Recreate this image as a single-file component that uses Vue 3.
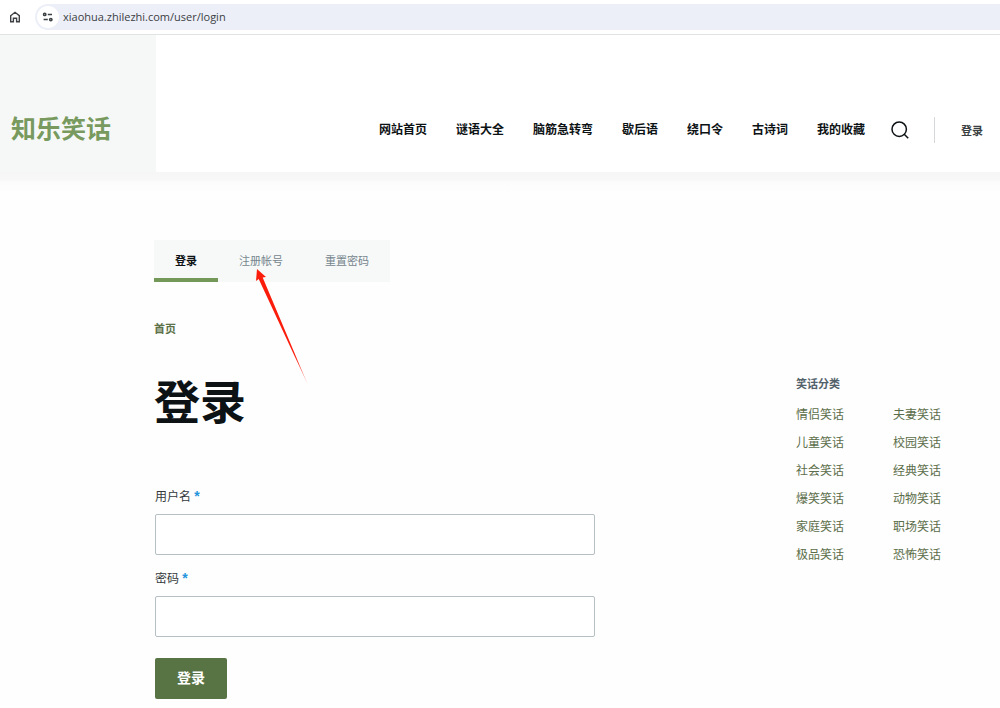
<script setup>
import { ref } from 'vue'

const address = ref('xiaohua.zhilezhi.com/user/login')
const username = ref('')
const password = ref('')
const navItems = ['网站首页', '谜语大全', '脑筋急转弯', '歇后语', '绕口令', '古诗词', '我的收藏']
const tabs = ['登录', '注册帐号', '重置密码']
const categories = [
  '情侣笑话', '夫妻笑话',
  '儿童笑话', '校园笑话',
  '社会笑话', '经典笑话',
  '爆笑笑话', '动物笑话',
  '家庭笑话', '职场笑话',
  '极品笑话', '恐怖笑话',
]
</script>

<template>
  <div class="page">
    <div class="browser-bar">
      <button class="home" type="button" aria-label="Home">
        <svg width="12" height="12" viewBox="0 0 12 12" fill="none" stroke="#3c4043" stroke-width="1.4">
          <path d="M1.7 4.7 6 1.3l4.3 3.4v6.1H7.6V7.2H4.4v3.6H1.7z" />
        </svg>
      </button>
      <div class="address">
        <span class="site-info">
          <svg width="12" height="10" viewBox="0 0 12 10" fill="none" stroke="#3c4043" stroke-width="1.5">
            <circle cx="2.700" cy="2.400" r="1.2" />
            <path d="M5.800 2.400h4.200M1.600 7.600h4.200" />
            <circle cx="8.800" cy="7.600" r="1.2" />
          </svg>
        </span>
        <input v-model="address" class="url" type="text" aria-label="URL" />
      </div>
    </div>

    <header class="header">
      <div class="brand"><a href="#">知乐笑话</a></div>
      <nav class="nav">
        <a v-for="item in navItems" :key="item" href="#">{{ item }}</a>
      </nav>
      <button class="search" type="button" aria-label="搜索">
        <svg width="18" height="18" viewBox="0 0 18 18" fill="none" stroke="#0d1214" stroke-width="1.5">
          <circle cx="8.2" cy="8.2" r="7.2" />
          <path d="m13.2 13.2 4 4" />
        </svg>
      </button>
      <div class="account"><a href="#">登录</a></div>
    </header>
    <div class="header-shade"></div>

    <main class="main">
      <section class="content">
        <div class="tabs-wrap">
          <nav class="tabs">
            <a v-for="(tab, i) in tabs" :key="tab" href="#" :class="{ active: i === 0 }">{{ tab }}</a>
          </nav>
          <svg class="arrow" width="56" height="118" viewBox="0 0 56 118">
            <defs>
              <linearGradient id="arrow-fill" x1="0" y1="0" x2="0" y2="1">
                <stop offset="0.75" stop-color="#fb1d0c" />
                <stop offset="1" stop-color="#fb1d0c" stop-opacity="0.35" />
              </linearGradient>
            </defs>
            <path d="M3 1 12 9 8.700 9.500 54 117 4.700 11 2 13z" fill="url(#arrow-fill)" />
          </svg>
        </div>
        <nav class="crumbs"><a href="#">首页</a></nav>
        <h1>登录</h1>
        <form @submit.prevent>
          <label for="username">用户名 <span>*</span></label>
          <input id="username" v-model="username" type="text" />
          <label for="password">密码 <span>*</span></label>
          <input id="password" v-model="password" type="password" />
          <button class="submit" type="submit">登录</button>
        </form>
      </section>

      <aside class="sidebar">
        <h2>笑话分类</h2>
        <ul>
          <li v-for="name in categories" :key="name"><a href="#">{{ name }}</a></li>
        </ul>
      </aside>
    </main>
  </div>
</template>

<style>
body {
  margin: 0;
  background: #fefefe;
}
</style>

<style scoped>
.page {
  font-family: "Liberation Sans", "Noto Sans CJK SC", sans-serif;
  font-size: 12px;
  color: #0d1214;
}
.page * {
  box-sizing: border-box;
}
a {
  color: inherit;
  text-decoration: none;
}
button {
  padding: 0;
  border: 0;
  background: none;
  font-family: inherit;
  cursor: pointer;
}

.browser-bar {
  display: flex;
  align-items: center;
  height: 35px;
  border-bottom: 1px solid #e0e3e6;
  padding: 0 0 1px 9px;
  background: #fff;
}
.home {
  display: flex;
  margin-right: 14px;
}
.address {
  display: flex;
  flex: 1;
  align-items: center;
  height: 26px;
  padding-left: 2px;
  border-radius: 13px 0 0 13px;
  background: #eceff8;
}
.site-info {
  display: flex;
  align-items: center;
  justify-content: center;
  width: 22px;
  height: 22px;
  border-radius: 50%;
  background: #fff;
}
.url {
  flex: 1;
  min-width: 0;
  padding: 0 4px;
  border: 0;
  background: none;
  outline: 0;
  color: #3b3e43;
  font: 11px/20px "Open Sans", sans-serif;
}

.header {
  display: flex;
  align-items: stretch;
  height: 137px;
  background: #fff;
}
.header > .nav,
.header > .search,
.header > .account {
  margin-top: 82px;
  height: 26px;
}
.brand {
  width: 156px;
  padding: 77px 0 0 11px;
  background: #f6f8f8;
  color: #789a5e;
  font-size: 25px;
  font-weight: 700;
  line-height: 35px;
}
.nav {
  display: flex;
  flex: 1;
  align-items: center;
  justify-content: flex-end;
  gap: 29px;
  font-weight: 700;
  line-height: 18px;
  white-space: nowrap;
}
.search {
  display: flex;
  align-items: center;
  margin: 0 25px 0 26px;
}
.account {
  display: flex;
  align-items: center;
  padding: 0 17px 0 26px;
  border-left: 1px solid #d5d7d8;
  color: #3a3f41;
  font-size: 11px;
  font-weight: 700;
}
.header-shade {
  height: 22px;
  background: linear-gradient(#f6f6f6 0, #f8f8f8 8px, #fcfcfc 10px, #fefefe 100%);
}

.main {
  display: grid;
  grid-template-columns: minmax(0, 1fr) 204px;
  padding: 46px 0 9px 154px;
}
.tabs-wrap {
  position: relative;
}
.tabs {
  display: inline-flex;
  vertical-align: top;
  background: #f7f9f9;
}
.tabs a {
  height: 42px;
  padding: 0 21px;
  border-bottom: 4px solid transparent;
  color: #75858c;
  font-size: 11px;
  line-height: 42px;
}
.tabs .active {
  border-color: #739857;
  color: #0d1214;
  font-weight: 700;
}
.arrow {
  position: absolute;
  top: 28px;
  left: 100px;
}
.crumbs {
  margin-top: 38px;
  color: #5d7148;
  font-size: 11px;
  font-weight: 700;
  line-height: 18px;
}
h1 {
  margin: 35px 0 53px;
  font-size: 46px;
  line-height: 60px;
}
form {
  display: flex;
  flex-direction: column;
  align-items: flex-start;
  padding-left: 1px;
}
label {
  margin-bottom: 7px;
  color: #34393c;
  line-height: 20px;
}
label span {
  color: #2494db;
  font-size: 14px;
  font-weight: 700;
}
form input {
  width: 100%;
  max-width: 440px;
  height: 41px;
  margin-bottom: 13px;
  padding: 0 12px;
  border: 1px solid #b6bfc4;
  border-radius: 2px;
  background: #fff;
  font-size: 14px;
}
.submit {
  height: 41px;
  margin-top: 8px;
  padding: 0 22px 4px;
  border-radius: 2px;
  background: #587445;
  color: #fff;
  font-size: 14px;
  font-weight: 700;
}

.sidebar {
  padding-top: 134px;
}
h2 {
  margin: 0 0 7px;
  color: #52616a;
  font-size: 11px;
  font-weight: 700;
  line-height: 20px;
}
ul {
  display: grid;
  grid-template-columns: 97px 1fr;
  margin: 0;
  padding: 0;
  list-style: none;
  color: #5b6d49;
  line-height: 28px;
}
</style>
